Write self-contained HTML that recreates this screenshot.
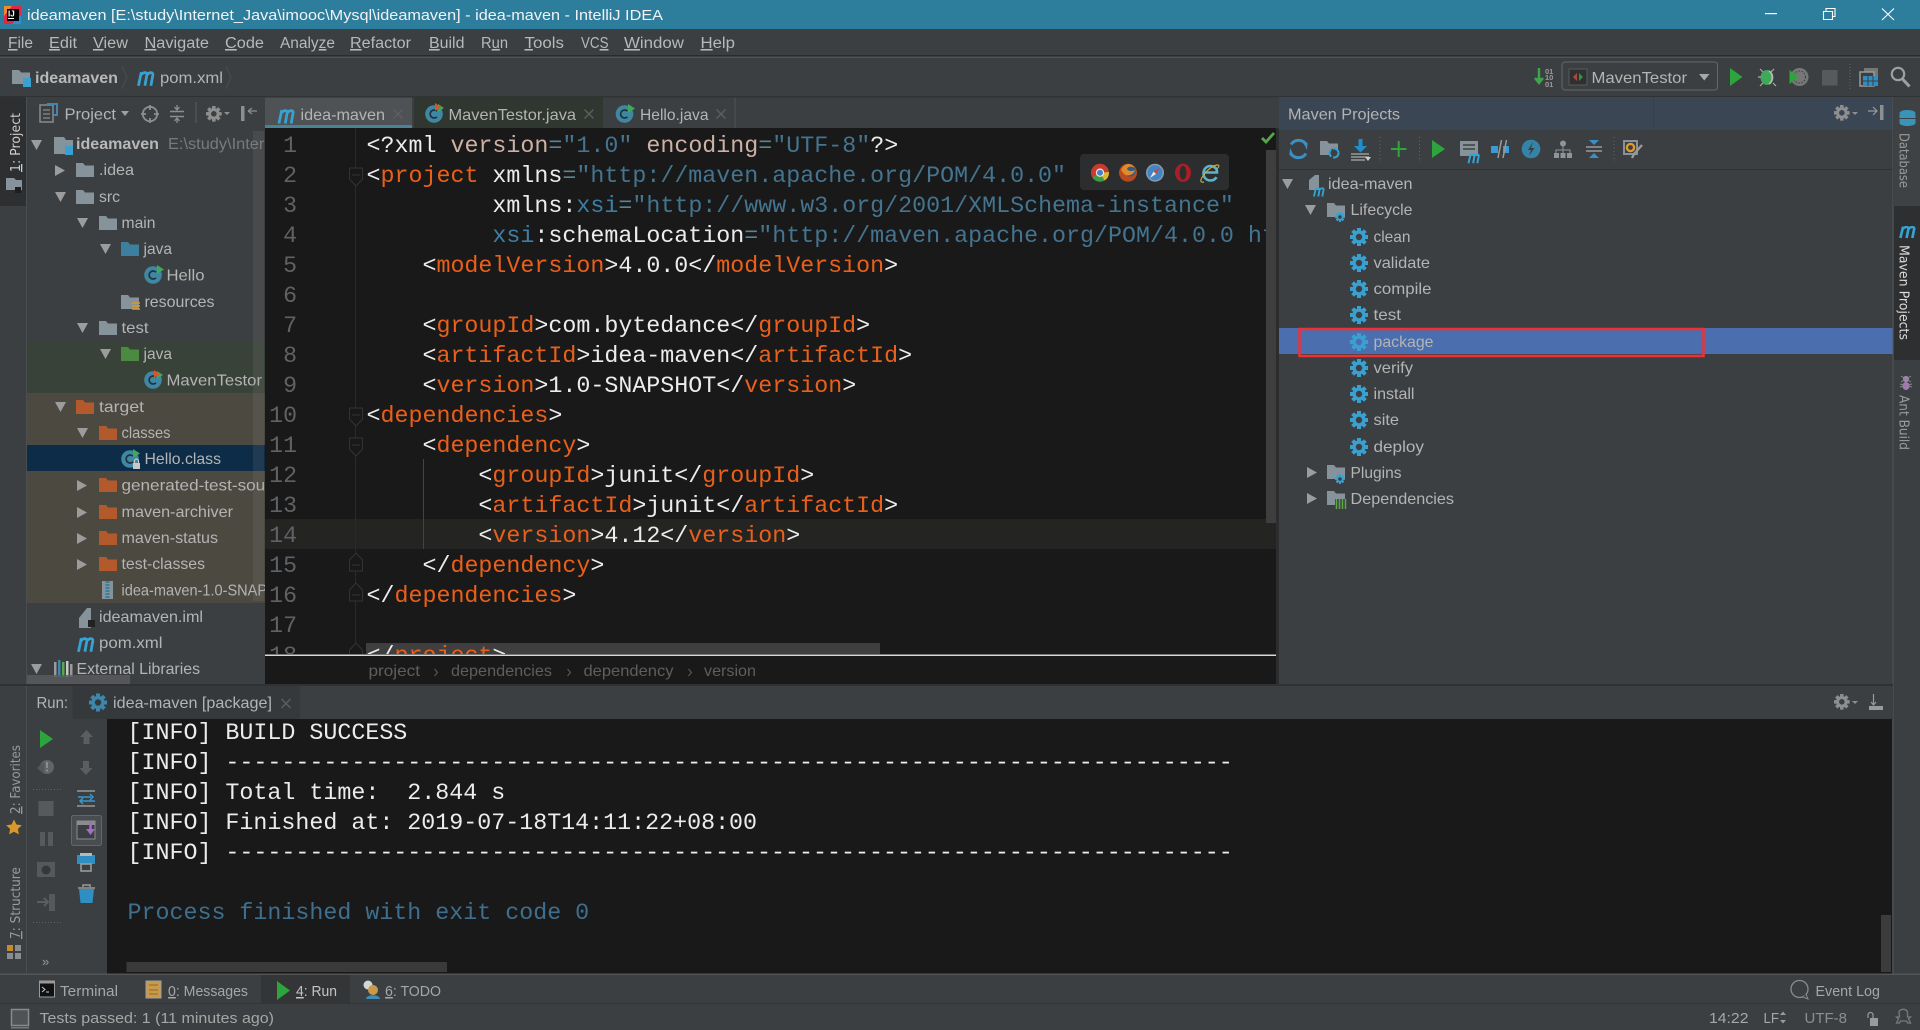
<!DOCTYPE html>
<html><head><meta charset="utf-8"><title>ideamaven - IntelliJ IDEA</title>
<style>
html,body{margin:0;padding:0;background:#3c3f41;width:1920px;height:1030px;overflow:hidden}
svg{display:block}
text{font-family:"Liberation Sans",sans-serif;font-size:16px;fill:#b4b4b4;white-space:pre}
.m{font-size:15.5px;fill:#b8b8b8}
.st{font-size:15px;fill:#a6a6a6}
.gr{fill:#7a7a7a}
.v{font-family:"DejaVu Sans",sans-serif;font-size:13px;fill:#9a9a9a}
.c,.c text,.c tspan{font-family:"Liberation Mono",monospace;font-size:23.32px}
.c text{fill:#ececec}
.n{font-family:"Liberation Mono",monospace;font-size:23.2px;fill:#5f6265}
.o{fill:#e8601c}.b{fill:#44748f}.p{fill:#cdb0a6}.e{fill:#5b8296}.w{fill:#ececec}.x{fill:#3f7ea3}
.u{text-decoration:underline}
.cx{stroke:#5c5f61;stroke-width:1.3;fill:none}
.ln{stroke:#2f3133;stroke-width:1}
</style></head><body>
<svg xmlns="http://www.w3.org/2000/svg" width="1920" height="1030" viewBox="0 0 1920 1030">
<defs>
<path id="f" d="M0 0H7L9 2.5H18V14H0Z"/>
<path id="ad" d="M0 0H11L5.5 10Z" fill="#9c9c9c"/>
<path id="ar" d="M0 0L10 5.5L0 11Z" fill="#9c9c9c"/>
<path id="mi" d="M1.2 14L3.6 2.6M3.2 5C5 2.6 8.6 2.2 8.2 5L6.6 14M8.2 5C10 2.6 13.6 2.2 13.2 5L11.6 14" fill="none" stroke="#37a3d2" stroke-width="2.3"/>
<g id="gr"><circle cx="9" cy="9" r="6.6"/><rect x="7" y="0" width="4" height="18"/><rect x="0" y="7" width="18" height="4"/><rect x="7" y="0" width="4" height="18" transform="rotate(45 9 9)"/><rect x="7" y="0" width="4" height="18" transform="rotate(-45 9 9)"/><circle cx="9" cy="9" r="3.2" fill="currentColor"/></g>
<g id="cl"><circle cx="9" cy="10" r="8.8" fill="#3f87a3"/><path d="M12 7.2A4 4 0 1 0 12 12.8" fill="none" stroke="#20333d" stroke-width="1.7"/></g>
</defs>

<rect width="1920" height="1030" fill="#3c3f41"/>

<!-- title bar -->
<rect width="1920" height="29" fill="#2d7d9d"/>
<rect x="4" y="6" width="17" height="18" fill="#e2264a"/><path d="M4 6h8L4 16z" fill="#f08a2c"/><path d="M21 24h-9l9-9z" fill="#2b8fd8"/>
<rect x="7" y="9" width="12" height="12" fill="#000"/>
<text x="8" y="16.5" style="font-size:8px;font-weight:bold;fill:#fff">IJ</text><rect x="8" y="18" width="6" height="1" fill="#fff"/>
<text x="27" y="20" textLength="636" lengthAdjust="spacingAndGlyphs" style="font-size:15px;fill:#f2f2f2">ideamaven [E:\study\Internet_Java\imooc\Mysql\ideamaven] - idea-maven - IntelliJ IDEA</text>
<rect x="1765" y="13" width="12" height="1.2" fill="#fff"/>
<path d="M1823.5 11.5h9v8h-9zM1826 11.5v-3h9v8h-2.5" fill="none" stroke="#fff" stroke-width="1.1"/>
<path d="M1882 8.5l12 11.5M1894 8.5l-12 11.5" stroke="#fff" stroke-width="1.1" fill="none"/>

<!-- menu -->
<g class="menu">
<text class="m" x="8" y="48" textLength="25" lengthAdjust="spacingAndGlyphs"><tspan class="u m">F</tspan>ile</text>
<text class="m" x="49" y="48" textLength="28" lengthAdjust="spacingAndGlyphs"><tspan class="u m">E</tspan>dit</text>
<text class="m" x="93" y="48" textLength="35" lengthAdjust="spacingAndGlyphs"><tspan class="u m">V</tspan>iew</text>
<text class="m" x="144.5" y="48" textLength="64.5" lengthAdjust="spacingAndGlyphs"><tspan class="u m">N</tspan>avigate</text>
<text class="m" x="225" y="48" textLength="39" lengthAdjust="spacingAndGlyphs"><tspan class="u m">C</tspan>ode</text>
<text class="m" x="280" y="48" textLength="55" lengthAdjust="spacingAndGlyphs">Analy<tspan class="u m">z</tspan>e</text>
<text class="m" x="350" y="48" textLength="61" lengthAdjust="spacingAndGlyphs"><tspan class="u m">R</tspan>efactor</text>
<text class="m" x="429" y="48" textLength="35.5" lengthAdjust="spacingAndGlyphs"><tspan class="u m">B</tspan>uild</text>
<text class="m" x="481" y="48" textLength="27" lengthAdjust="spacingAndGlyphs">R<tspan class="u m">u</tspan>n</text>
<text class="m" x="524.5" y="48" textLength="39.5" lengthAdjust="spacingAndGlyphs"><tspan class="u m">T</tspan>ools</text>
<text class="m" x="581" y="48" textLength="27.5" lengthAdjust="spacingAndGlyphs">VC<tspan class="u m">S</tspan></text>
<text class="m" x="624" y="48" textLength="60" lengthAdjust="spacingAndGlyphs"><tspan class="u m">W</tspan>indow</text>
<text class="m" x="700.5" y="48" textLength="34.5" lengthAdjust="spacingAndGlyphs"><tspan class="u m">H</tspan>elp</text>
</g>
<rect y="55" width="1920" height="1" fill="#2b2b2b"/>
<rect y="57" width="1920" height="1" fill="#515355"/>

<!-- navigation bar -->
<use href="#f" x="12" y="70" fill="#87939a"/><rect x="23" y="78" width="8" height="9" fill="#3aa0d0"/>
<text x="35" y="83" textLength="83" lengthAdjust="spacingAndGlyphs" style="font-weight:bold;fill:#b8b8b8">ideamaven</text>
<path d="M122 66l5 11-5 12" style="stroke:#4a4d4f;fill:none"/>
<use href="#mi" transform="translate(137,69) scale(1.2,1.2)"/>
<text x="160" y="83" textLength="63" lengthAdjust="spacingAndGlyphs">pom.xml</text>
<path d="M226 66l5 11-5 12" style="stroke:#4a4d4f;fill:none"/>
<rect y="96" width="1920" height="1" fill="#2f3133"/>

<!-- right toolbar -->
<path d="M1539 68v12M1535 78l4 5 4-5" stroke="#3ea64a" stroke-width="2.4" fill="#3ea64a"/>
<text x="1545" y="74" style="font-size:7.5px;font-weight:bold;fill:#9a9a9a">01</text><text x="1545" y="80" style="font-size:7.5px;font-weight:bold;fill:#9a9a9a">10</text><text x="1545" y="87" style="font-size:7.5px;font-weight:bold;fill:#9a9a9a">01</text>
<rect x="1562" y="62" width="155.5" height="28" rx="3" fill="#3c3f41" stroke="#646668"/>
<rect x="1569" y="69" width="18" height="16" fill="#2e3032" stroke="#5a5a5a"/><path d="M1577 73l-4 4 4 4z" fill="#b0483a"/><path d="M1579 73l4 4-4 4z" fill="#3e8a4a"/>
<text x="1591.5" y="83" textLength="95.5" lengthAdjust="spacingAndGlyphs">MavenTestor</text>
<path d="M1699 74h10.5l-5.2 6.5z" fill="#a8a8a8"/>
<path d="M1730 68l12.5 9-12.5 9z" fill="#2ba53c"/>
<ellipse cx="1767" cy="77.5" rx="6.5" ry="7.5" fill="#3fa95a"/><path d="M1769 71a6.5 7.500 0 0 1 0 13" fill="none" stroke="#bbb" stroke-width="1.6"/><path d="M1760 69l3 3M1774 69l-3 3M1758 77h3M1760 86l3-3M1776 86l-3-3" stroke="#aaa" stroke-width="1.2"/>
<circle cx="1799.5" cy="77" r="9" fill="#777"/><circle cx="1799.500" cy="77" r="6" fill="none" stroke="#3c3f41" stroke-width="1" stroke-dasharray="1.5 1.5"/><path d="M1789.5 70l9 7-9 7z" fill="#2ba53c"/>
<rect x="1822" y="70" width="15.5" height="15.5" fill="#58595a"/>
<path d="M1850 64v27" stroke="#666" stroke-dasharray="1 2"/>
<rect x="1864" y="68" width="14" height="14" fill="#777"/><rect x="1860" y="72" width="14" height="14" fill="#3c3f41" stroke="#9a9a9a" stroke-width="1.5"/><rect x="1863" y="76" width="15" height="10" fill="#2f8fc2"/><path d="M1863 81h15M1868 76v10M1873 76v10" stroke="#3c3f41"/>
<circle cx="1898" cy="74" r="6.2" fill="none" stroke="#9f9f9f" stroke-width="2.2"/><path d="M1902.5 79l7 7.5" stroke="#9f9f9f" stroke-width="3"/>

<!-- left strip -->
<rect x="0" y="97" width="26" height="109" fill="#2d2f31"/>
<rect x="26" y="97" width="1" height="877" fill="#4b4e50"/>
<text class="v" style="fill:#cfcfcf" transform="translate(20,172) rotate(-90)" textLength="59" lengthAdjust="spacingAndGlyphs"><tspan class="u v" style="fill:#cfcfcf">1</tspan>: Project</text>
<path d="M6 178h8l2 2h6v10H6z" fill="#87939a"/><rect x="15" y="187" width="6" height="6" fill="#1e1e1e"/>
<text class="v" transform="translate(20,814) rotate(-90)" textLength="69" lengthAdjust="spacingAndGlyphs"><tspan class="u v">2</tspan>: Favorites</text>
<path d="M14 819.5l2.4 5 5.4.7-3.9 3.8 1 5.4-4.9-2.6-4.9 2.6 1-5.4-3.9-3.8 5.4-.7z" fill="#d9982c"/>
<text class="v" transform="translate(20,939) rotate(-90)" textLength="72" lengthAdjust="spacingAndGlyphs"><tspan class="u v">7</tspan>: Structure</text>
<rect x="7" y="945" width="6" height="6" fill="#c98a2e"/><rect x="15" y="945" width="6" height="6" fill="#8a8d8f"/><rect x="7" y="953" width="6" height="6" fill="#8a8d8f"/><rect x="15" y="953" width="6" height="6" fill="#8a8d8f"/>

<!-- project pane -->
<rect x="27" y="341" width="238" height="52" fill="#394239"/>
<rect x="27" y="393" width="238" height="210" fill="#4c4940"/>
<rect x="27" y="445" width="238" height="26" fill="#0d2c47"/>

<rect x="40" y="105" width="13" height="17" fill="#3c3f41" stroke="#8a8a8a" stroke-width="1.5"/><path d="M43 110h7M43 114h7M43 118h7" stroke="#8a8a8a" stroke-width="1.3"/><path d="M47 104h10v11h-4" fill="none" stroke="#3f87b0" stroke-width="2"/>
<text x="64.5" y="119.5" textLength="51.5" lengthAdjust="spacingAndGlyphs">Project</text>
<path d="M121 111h8l-4 5z" fill="#a0a0a0"/>
<circle cx="150" cy="114" r="7.2" fill="none" stroke="#8e8e8e" stroke-width="1.8"/><path d="M150 105v5M150 118v5M141 114h5M154 114h5" stroke="#8e8e8e" stroke-width="1.8"/>
<path d="M170 111.5h14M170 116.5h14" stroke="#8e8e8e" stroke-width="1.4"/><path d="M177 105v4M174.5 107l2.5 3 2.5-3M177 123v-4M174.5 121l2.5-3 2.5 3" stroke="#8e8e8e" stroke-width="1.3" fill="none"/>
<rect x="195.5" y="102" width="1" height="21" fill="#5c5f61"/>
<use href="#gr" transform="translate(206,106) scale(.87)" fill="#8e8e8e" color="#3c3f41"/>
<path d="M224 112h6l-3 3z" fill="#8e8e8e"/>
<rect x="241" y="106" width="3.5" height="15" fill="#8e8e8e"/><path d="M248 111h9M248 111l4-3M248 111l4 3" stroke="#8e8e8e" stroke-width="1.2" fill="none"/>

<g>
<use href="#ad" x="31" y="140"/><path d="M54 137h10l2 3h7v14H54z" fill="#87939a"/><rect x="65" y="146" width="8" height="9" fill="#3aa0d0"/>
<text x="76" y="149" textLength="83" lengthAdjust="spacingAndGlyphs" style="font-weight:bold;fill:#b8b8b8">ideamaven</text>
<text class="gr" x="168" y="149" textLength="119" lengthAdjust="spacingAndGlyphs">E:\study\Internet</text>

<use href="#ar" x="55" y="165"/><use href="#f" x="76" y="163" fill="#87939a"/>
<text x="99" y="175" textLength="35" lengthAdjust="spacingAndGlyphs">.idea</text>
<use href="#ad" x="55" y="192"/><use href="#f" x="76" y="190" fill="#87939a"/>
<text x="99" y="202" textLength="21" lengthAdjust="spacingAndGlyphs">src</text>
<use href="#ad" x="77" y="218"/><use href="#f" x="99" y="216" fill="#87939a"/>
<text x="121.5" y="228" textLength="34" lengthAdjust="spacingAndGlyphs">main</text>
<use href="#ad" x="100" y="244"/><use href="#f" x="121" y="242" fill="#3d7f9f"/>
<text x="143.5" y="254" textLength="28.5" lengthAdjust="spacingAndGlyphs">java</text>
<use href="#cl" x="144" y="265"/><path d="M157 265l7 4.5-7 4.5z" fill="#3fa95a"/>
<text x="166.5" y="280.5" textLength="38" lengthAdjust="spacingAndGlyphs">Hello</text>
<use href="#f" x="121" y="295" fill="#87939a"/><path d="M132 303h8M132 306h8M132 309h8" stroke="#d99a2c" stroke-width="1.6"/>
<text x="144.5" y="307" textLength="70" lengthAdjust="spacingAndGlyphs">resources</text>
<use href="#ad" x="77" y="323"/><use href="#f" x="99" y="321" fill="#87939a"/>
<text x="121.5" y="333" textLength="27" lengthAdjust="spacingAndGlyphs">test</text>
<use href="#ad" x="100" y="349"/><use href="#f" x="121" y="347" fill="#4b8a40"/>
<text x="143.5" y="359" textLength="28.5" lengthAdjust="spacingAndGlyphs">java</text>
<use href="#cl" x="144" y="370"/><path d="M157 371l6 4-6 4z" fill="#3fa95a"/><path d="M154 370l6 4-6 4z" fill="#d9532c"/>
<text x="166.5" y="385.5" textLength="95.5" lengthAdjust="spacingAndGlyphs">MavenTestor</text>
<use href="#ad" x="55" y="402"/><use href="#f" x="76" y="400" fill="#b25a2c"/>
<text x="99" y="412" textLength="45" lengthAdjust="spacingAndGlyphs">target</text>
<use href="#ad" x="77" y="428"/><use href="#f" x="99" y="426" fill="#b25a2c"/>
<text x="121.5" y="438" textLength="49" lengthAdjust="spacingAndGlyphs">classes</text>
<use href="#cl" x="121" y="449"/><path d="M133 449l7 4.5-7 4.5z" fill="#3fa95a"/><rect x="133" y="463" width="7" height="6" fill="#c8c8c8"/><path d="M134.5 463v-2a2 2 0 0 1 4 0v2" fill="none" stroke="#c8c8c8" stroke-width="1.2"/>
<text x="144.5" y="464" textLength="76.5" lengthAdjust="spacingAndGlyphs">Hello.class</text>
<use href="#ar" x="77" y="480"/><use href="#f" x="99" y="478" fill="#b25a2c"/>
<text x="121.5" y="490.5" textLength="176" lengthAdjust="spacingAndGlyphs">generated-test-sources</text>
<use href="#ar" x="77" y="507"/><use href="#f" x="99" y="505" fill="#b25a2c"/>
<text x="121.5" y="517" textLength="111.5" lengthAdjust="spacingAndGlyphs">maven-archiver</text>
<use href="#ar" x="77" y="533"/><use href="#f" x="99" y="531" fill="#b25a2c"/>
<text x="121.5" y="543" textLength="96.5" lengthAdjust="spacingAndGlyphs">maven-status</text>
<use href="#ar" x="77" y="559"/><use href="#f" x="99" y="557" fill="#b25a2c"/>
<text x="121.5" y="569" textLength="83.5" lengthAdjust="spacingAndGlyphs">test-classes</text>
<rect x="102" y="581" width="11" height="18" fill="#87939a"/><path d="M107.5 581v18" stroke="#3a7f9f" stroke-width="4" stroke-dasharray="2 1"/>
<text x="121.5" y="595.5" textLength="186" lengthAdjust="spacingAndGlyphs">idea-maven-1.0-SNAPSHOT</text>
<path d="M79 621v-3l8-10h4v20H79z" fill="#87939a"/><rect x="88" y="620" width="7" height="7" fill="#222"/>
<text x="99" y="622" textLength="104" lengthAdjust="spacingAndGlyphs">ideamaven.iml</text>
<use href="#mi" transform="translate(77,635) scale(1.2,1.2)"/>
<text x="99" y="648" textLength="63.5" lengthAdjust="spacingAndGlyphs">pom.xml</text>
<use href="#ad" x="31" y="664"/><rect x="54" y="662" width="2.5" height="15" fill="#9a9a9a"/><rect x="58" y="660" width="2.5" height="17" fill="#3f87b0"/><rect x="62" y="662" width="2.5" height="15" fill="#5ca74a"/><rect x="66" y="661" width="2.5" height="16" fill="#c8c8c8"/><rect x="70" y="664" width="2.5" height="13" fill="#9a9a9a"/>
<text x="76.5" y="674" textLength="123.5" lengthAdjust="spacingAndGlyphs">External Libraries</text>
</g>
<rect x="253" y="131" width="11" height="470" fill="#8a8a8a" opacity=".16"/>
<rect x="27" y="675" width="103" height="9" fill="#5a5d5f" opacity=".8"/>

<!-- editor -->
<rect x="265" y="97" width="1012" height="31" fill="#3c3f41"/>
<rect x="265" y="128" width="1012" height="556" fill="#191919"/>
<rect x="265" y="519" width="1012" height="30" fill="#242422"/>
<rect x="355" y="128" width="1" height="526" fill="#2a2a2a"/>
<rect x="423" y="459" width="1" height="90" fill="#3b4a33"/>

<!-- tabs -->
<rect x="265" y="97" width="147" height="31" fill="#4e5254"/>
<rect x="265" y="125" width="147" height="3" fill="#4a8297"/>
<use href="#mi" transform="translate(277.5,107) scale(1.18,1.18)"/>
<text x="300.5" y="120" textLength="84.5" lengthAdjust="spacingAndGlyphs">idea-maven</text>
<path d="M393.5 109.5l9 9M402.5 109.5l-9 9" class="cx"/>
<rect x="414" y="97" width="189" height="31" fill="#2f3730"/>
<use href="#cl" x="425" y="104"/><path d="M438 104l6 4-6 4z" fill="#3fa95a"/><path d="M435 103l6 4-6 4z" fill="#d9532c"/>
<text x="448.5" y="120" textLength="127.5" lengthAdjust="spacingAndGlyphs">MavenTestor.java</text>
<path d="M584.5 109.5l9 9M593.5 109.5l-9 9" class="cx"/>
<rect x="734.5" y="97" width="1" height="31" fill="#505254"/>
<use href="#cl" x="615.5" y="104"/><path d="M628 104l7 4.5-7 4.5z" fill="#3fa95a"/>
<text x="640" y="120" textLength="68.5" lengthAdjust="spacingAndGlyphs">Hello.java</text>
<path d="M716.5 109.5l9 9M725.5 109.5l-9 9" class="cx"/>
<rect x="265" y="96.5" width="1012" height="1" fill="#323436"/>

<!-- gutter -->
<g text-anchor="end">
<text class="n" x="297" y="152">1</text><text class="n" x="297" y="182">2</text><text class="n" x="297" y="212">3</text><text class="n" x="297" y="242">4</text><text class="n" x="297" y="272">5</text><text class="n" x="297" y="302">6</text><text class="n" x="297" y="332">7</text><text class="n" x="297" y="362">8</text><text class="n" x="297" y="392">9</text><text class="n" x="297" y="422">10</text><text class="n" x="297" y="452">11</text><text class="n" x="297" y="482">12</text><text class="n" x="297" y="512">13</text><text class="n" x="297" y="542">14</text><text class="n" x="297" y="572">15</text><text class="n" x="297" y="602">16</text><text class="n" x="297" y="632">17</text><text class="n" x="297" y="662">18</text>
</g>
<g fill="#191919" stroke="#333" stroke-width="1">
<path d="M349.5 168h13v11l-6.500 7-6.500-7zM352 175h8"/>
<path d="M349.500 408h13v11l-6.500 7-6.500-7zM352 415h8"/>
<path d="M349.500 438h13v11l-6.500 7-6.500-7zM352 445h8"/>
<path d="M349.500 571h13v-11l-6.500-7-6.500 7zM352 565h8"/>
<path d="M349.500 601h13v-11l-6.500-7-6.500 7zM352 595h8"/>
<path d="M349.500 661h13v-11l-6.500-7-6.500 7z"/>
</g>

<!-- code -->
<g class="c">
<text x="366.500" y="152"><tspan class="w">&lt;?xml </tspan><tspan class="p">version</tspan><tspan class="e">=</tspan><tspan class="b">"1.0"</tspan> <tspan class="p">encoding</tspan><tspan class="e">=</tspan><tspan class="b">"UTF-8"</tspan><tspan class="w">?&gt;</tspan></text>
<text x="366.500" y="182"><tspan class="w">&lt;</tspan><tspan class="o">project</tspan><tspan class="w"> xmlns</tspan><tspan class="e">=</tspan><tspan class="b">"http://maven.apache.org/POM/4.0.0"</tspan></text>
<text x="366.500" y="212">         <tspan class="w">xmlns:</tspan><tspan class="x">xsi</tspan><tspan class="e">=</tspan><tspan class="b">"http://www.w3.org/2001/XMLSchema-instance"</tspan></text>
<text x="366.500" y="242">         <tspan class="x">xsi</tspan><tspan class="w">:schemaLocation</tspan><tspan class="e">=</tspan><tspan class="b">"http://maven.apache.org/POM/4.0.0 ht</tspan></text>
<text x="366.500" y="272">    &lt;<tspan class="o">modelVersion</tspan>&gt;4.0.0&lt;/<tspan class="o">modelVersion</tspan>&gt;</text>
<text x="366.500" y="332">    &lt;<tspan class="o">groupId</tspan>&gt;com.bytedance&lt;/<tspan class="o">groupId</tspan>&gt;</text>
<text x="366.500" y="362">    &lt;<tspan class="o">artifactId</tspan>&gt;idea-maven&lt;/<tspan class="o">artifactId</tspan>&gt;</text>
<text x="366.500" y="392">    &lt;<tspan class="o">version</tspan>&gt;1.0-SNAPSHOT&lt;/<tspan class="o">version</tspan>&gt;</text>
<text x="366.500" y="422">&lt;<tspan class="o">dependencies</tspan>&gt;</text>
<text x="366.500" y="452">    &lt;<tspan class="o">dependency</tspan>&gt;</text>
<text x="366.500" y="482">        &lt;<tspan class="o">groupId</tspan>&gt;junit&lt;/<tspan class="o">groupId</tspan>&gt;</text>
<text x="366.500" y="512">        &lt;<tspan class="o">artifactId</tspan>&gt;junit&lt;/<tspan class="o">artifactId</tspan>&gt;</text>
<text x="366.500" y="542">        &lt;<tspan class="o">version</tspan>&gt;4.12&lt;/<tspan class="o">version</tspan>&gt;</text>
<text x="366.500" y="572">    &lt;/<tspan class="o">dependency</tspan>&gt;</text>
<text x="366.500" y="602">&lt;/<tspan class="o">dependencies</tspan>&gt;</text>
<rect x="366" y="643" width="514" height="11" fill="#3f3f3f"/>
<text x="366.500" y="662">&lt;/<tspan class="o">project</tspan>&gt;</text>
</g>
<!-- cover line 18 below editor, breadcrumb -->
<rect x="265" y="654" width="1012" height="30" fill="#191919"/>
<rect x="265" y="654.500" width="1012" height="1.500" fill="#d8d8d8"/>
<text x="368.500" y="676" textLength="51.500" lengthAdjust="spacingAndGlyphs" style="fill:#5e5e5e">project</text>
<path d="M434.500 669l3 3.500-3 3.500" fill="none" stroke="#5e5e5e"/>
<text x="451" y="676" textLength="101" lengthAdjust="spacingAndGlyphs" style="fill:#5e5e5e">dependencies</text>
<path d="M567.500 669l3 3.500-3 3.500" fill="none" stroke="#5e5e5e"/>
<text x="583.500" y="676" textLength="90" lengthAdjust="spacingAndGlyphs" style="fill:#5e5e5e">dependency</text>
<path d="M688.500 669l3 3.500-3 3.500" fill="none" stroke="#5e5e5e"/>
<text x="704" y="676" textLength="52" lengthAdjust="spacingAndGlyphs" style="fill:#5e5e5e">version</text>
<rect x="1266" y="150" width="10" height="373" fill="#3e3e3e"/>
<path d="M1262 138l4 4 8-9" fill="none" stroke="#55a84a" stroke-width="2.800"/>
<rect x="1276" y="128" width="3" height="556" fill="#2b2d2e"/>

<!-- browser icons -->
<rect x="1080" y="154" width="149" height="36" rx="4" fill="#2c2d2e"/>
<g>
<circle cx="1100" cy="172.700" r="9" fill="#c93a30"/><path d="M1100 172.700L1092.200 177.200A9 9 0 0 0 1104.500 180.500z" fill="#3f9a45"/><path d="M1100 172.700L1104.500 180.500A9 9 0 0 0 1109 172.700V172z" fill="#d9b92f"/><circle cx="1100" cy="172.700" r="4.200" fill="#e8e8e8"/><circle cx="1100" cy="172.700" r="3" fill="#4a7fc0"/>
<circle cx="1128" cy="172.700" r="9" fill="#b84a1e"/><circle cx="1130" cy="171" r="5.500" fill="#2d5a8c"/><path d="M1121 170c3-7 10-8 14-2-3-2-7-2-8 1 2 3 6 2 8 1-1 5-8 7-11 4z" fill="#e08a2a"/>
<circle cx="1155" cy="172.700" r="9" fill="#8a9aa8"/><circle cx="1155" cy="172.700" r="7.500" fill="#3f86c4"/><path d="M1160 167.500l-6.500 4 2.500 2.500z" fill="#d8403a"/><path d="M1150 178l6-4-2.500-2.500z" fill="#e8e8e8"/>
<ellipse cx="1183" cy="172.700" rx="8" ry="9.200" fill="#a81f26"/><ellipse cx="1183" cy="172.700" rx="3.400" ry="7" fill="#2c2d2e"/>
<path d="M1203.500 172.500h13.500c.2-4-2.800-6.500-6.500-6.500-4.200 0-7 3.200-7 7.500 0 4 3 7 7 7 2.800 0 4.800-1.300 6-3.300" fill="none" stroke="#5cb4cc" stroke-width="2.600"/><path d="M1204 182c-4 1-4-2-1-6 3-5 9-10 14-11 3-.500 2 2 0 4" fill="none" stroke="#c9a93a" stroke-width="1.200"/>
</g>

<!-- maven pane -->
<rect x="1279" y="97" width="614" height="33" fill="#3a4654"/>
<rect x="1653" y="97" width="1" height="33" fill="#35404c"/>
<text x="1288" y="119.500" textLength="112" lengthAdjust="spacingAndGlyphs">Maven Projects</text>
<use href="#gr" transform="translate(1834,105) scale(.87)" fill="#8e8e8e" color="#3a4654"/>
<path d="M1852 112h6l-3 3z" fill="#8e8e8e"/>
<path d="M1868 111h9M1873 107l4 4-4 4" stroke="#9a9a9a" stroke-width="1.200" fill="none"/><rect x="1880" y="105" width="3.500" height="15" fill="#8e8e8e"/>

<!-- maven toolbar -->
<path d="M1306.500 145a9 9 0 0 0-15.500-.500M1290.500 153a9 9 0 0 0 15.500.500" fill="none" stroke="#3c8fc4" stroke-width="3"/><path d="M1302 140l5.500 3-.500 7zM1295 158l-5.500-3 .500-7z" fill="#3c8fc4"/>
<use href="#f" x="1320" y="141" fill="#87939a"/><circle cx="1334" cy="153" r="4.500" fill="#3c3f41" stroke="#35a0d4" stroke-width="2" stroke-dasharray="8 2"/>
<path d="M1360.500 139v9" stroke="#1e8fce" stroke-width="4"/><path d="M1354 146h13l-6.500 6.500z" fill="#1e8fce"/><path d="M1351 154h18M1351 157h18M1351 160h14" stroke="#9a9a9a" stroke-width="1.400"/><path d="M1365 157h6l-3 4z" fill="#ccc"/>
<path d="M1380 137v25" stroke="#666" stroke-dasharray="1 2.500"/>
<path d="M1391 149h15.500M1398.700 141v16" stroke="#30a53a" stroke-width="2"/>
<path d="M1419.500 137v25" stroke="#666" stroke-dasharray="1 2.500"/>
<path d="M1432 140l13 9-13 9z" fill="#2ba53c"/>
<rect x="1460" y="141" width="18" height="15" fill="#87939a"/><path d="M1463 145h12M1463 149h12" stroke="#3c3f41" stroke-width="1.500"/>
<use href="#mi" transform="translate(1467.500,152) scale(.85,.8)"/>
<rect x="1491" y="146" width="7" height="7" fill="#3c9ad6"/><rect x="1503" y="146" width="6" height="7" fill="#3c9ad6"/><path d="M1498 158l3.500-18M1503 158l3.500-18" stroke="#9a9a9a" stroke-width="1.500"/>
<circle cx="1531" cy="149" r="9.300" fill="#3583a8"/><path d="M1533 142l-5 8h3l-2 6 5.500-8h-3.500z" fill="#3c3f41"/>
<circle cx="1563" cy="143.500" r="3" fill="#8e9598"/><path d="M1563 146v4M1556 153v-3h14v3M1563 150v3" stroke="#8e9598" fill="none"/><rect x="1554" y="153" width="5" height="5" fill="#8e9598"/><rect x="1560.500" y="153" width="5" height="5" fill="#8e9598"/><rect x="1567" y="153" width="5" height="5" fill="#8e9598"/>
<path d="M1586 147h16M1586 151h16" stroke="#9a9a9a" stroke-width="1.600"/><path d="M1589 140h10l-5 5zM1589 158h10l-5-5z" fill="#3c8fc4"/>
<path d="M1614 137v25" stroke="#666" stroke-dasharray="1 2.500"/>
<rect x="1624" y="141" width="13" height="13" fill="#3c3f41" stroke="#87939a" stroke-width="2"/><circle cx="1630.500" cy="147.500" r="3.600" fill="#3c3f41" stroke="#e09a2a" stroke-width="2.400"/><path d="M1642 145l-8 9-2 4" stroke="#9a9a9a" stroke-width="2.400" fill="none"/>
<rect x="1279" y="169" width="614" height="1" fill="#323232"/>

<!-- maven tree -->
<rect x="1279" y="328" width="614" height="26" fill="#4b6eaf"/>
<use href="#ad" x="1282" y="179"/>
<path d="M1309 190v-10l6-5h4v15z" fill="#87939a"/><use href="#mi" transform="translate(1313,186) scale(.8,.75)"/>
<text x="1328" y="189" textLength="84.500" lengthAdjust="spacingAndGlyphs">idea-maven</text>
<use href="#ad" x="1305" y="205"/><use href="#f" x="1327" y="203" fill="#87939a"/><use href="#gr" transform="translate(1335,212) scale(.55)" fill="#3aa0d0" color="#3c3f41"/>
<text x="1350.500" y="215" textLength="62" lengthAdjust="spacingAndGlyphs">Lifecycle</text>
<g fill="#39a0cf" color="#3c3f41">
<use href="#gr" x="1350" y="228"/><use href="#gr" x="1350" y="254"/><use href="#gr" x="1350" y="280"/><use href="#gr" x="1350" y="306"/><use href="#gr" x="1350" y="333" color="#4b6eaf"/><use href="#gr" x="1350" y="359"/><use href="#gr" x="1350" y="385"/><use href="#gr" x="1350" y="411"/><use href="#gr" x="1350" y="438"/>
</g>
<text x="1373.500" y="242" textLength="37" lengthAdjust="spacingAndGlyphs">clean</text>
<text x="1373.500" y="268" textLength="56.500" lengthAdjust="spacingAndGlyphs">validate</text>
<text x="1373.500" y="294" textLength="58" lengthAdjust="spacingAndGlyphs">compile</text>
<text x="1373.500" y="320" textLength="27.500" lengthAdjust="spacingAndGlyphs">test</text>
<text x="1373.500" y="347" textLength="60" lengthAdjust="spacingAndGlyphs">package</text>
<text x="1373.500" y="373" textLength="39.500" lengthAdjust="spacingAndGlyphs">verify</text>
<text x="1373.500" y="399" textLength="41" lengthAdjust="spacingAndGlyphs">install</text>
<text x="1373.500" y="425" textLength="25.500" lengthAdjust="spacingAndGlyphs">site</text>
<text x="1373.500" y="452" textLength="50.500" lengthAdjust="spacingAndGlyphs">deploy</text>
<rect x="1299.500" y="329" width="404" height="27" fill="none" stroke="#f03035" stroke-width="2.500"/>
<use href="#ar" x="1307" y="467"/><use href="#f" x="1327" y="465" fill="#87939a"/><use href="#gr" transform="translate(1335,474) scale(.55)" fill="#3aa0d0" color="#3c3f41"/>
<text x="1350.500" y="478" textLength="51" lengthAdjust="spacingAndGlyphs">Plugins</text>
<use href="#ar" x="1307" y="493"/><use href="#f" x="1327" y="491" fill="#87939a"/><rect x="1335" y="499" width="11" height="10" fill="#3c3f41"/><path d="M1336.500 499v10M1339.500 499v10M1342.500 499v10M1345.500 499v10" stroke-width="1.500" stroke="#5ca74a"/>
<text x="1350.500" y="504" textLength="103.500" lengthAdjust="spacingAndGlyphs">Dependencies</text>

<!-- right strip -->
<rect x="1893" y="97" width="27" height="877" fill="#3c3f41"/>
<rect x="1892.500" y="97" width="1" height="877" fill="#525456"/>
<rect x="1893" y="97" width="27" height="109" fill="#3f4244"/>
<rect x="1894" y="206" width="26" height="154" fill="#2d2f31"/>
<ellipse cx="1907.500" cy="113" rx="8" ry="3" fill="#3a93b8"/><rect x="1899.500" y="114.500" width="16" height="3.500" fill="#3a93b8"/><rect x="1899.500" y="119" width="16" height="3.500" fill="#3a93b8"/><ellipse cx="1907.500" cy="123" rx="8" ry="3" fill="#3a93b8"/>
<text class="v" transform="translate(1899.500,133) rotate(90)" textLength="55" lengthAdjust="spacingAndGlyphs">Database</text>
<use href="#mi" transform="translate(1899,224) scale(1.150,1)"/>
<text class="v" style="fill:#dcdcdc" transform="translate(1899.500,245) rotate(90)" textLength="95" lengthAdjust="spacingAndGlyphs">Maven Projects</text>
<circle cx="1906" cy="379" r="3" fill="#a88ac0"/><ellipse cx="1906" cy="386" rx="3.500" ry="4" fill="#a876c0"/><path d="M1901 376l10 6M1911 376l-10 6M1900 384l12 3M1912 384l-12 3" stroke="#888" stroke-width="1"/>
<text class="v" transform="translate(1899.500,395) rotate(90)" textLength="55" lengthAdjust="spacingAndGlyphs">Ant Build</text>

<!-- run header -->
<rect x="0" y="684" width="1893" height="2" fill="#2f3133"/>
<rect x="27" y="686" width="1866" height="33" fill="#3c3f41"/>
<rect x="72.500" y="686" width="227.500" height="33" fill="#36393b"/>
<text x="36.500" y="708" textLength="31.500" lengthAdjust="spacingAndGlyphs">Run:</text>
<use href="#gr" x="89" y="693.500" fill="#3d87ab" color="#36393b"/>
<text x="113" y="708" textLength="159" lengthAdjust="spacingAndGlyphs">idea-maven [package]</text>
<path d="M281.500 699l9 9M290.500 699l-9 9" class="cx"/>
<use href="#gr" transform="translate(1834,694) scale(.87)" fill="#8e8e8e" color="#3c3f41"/>
<path d="M1852 701h6l-3 3z" fill="#8e8e8e"/>
<path d="M1873.500 694v11M1871 702l2.500 3 2.500-3" stroke="#9a9a9a" stroke-width="1.200" fill="none"/><rect x="1869" y="706" width="14" height="4" fill="#9a9a9a"/>

<!-- run tools -->
<path d="M40 730l13 9-13 9z" fill="#2ba53c"/>
<circle cx="47" cy="767" r="7" fill="#616466"/><path d="M37 768l7-6v12z" fill="#55585a"/><rect x="46" y="762" width="2" height="6" fill="#8a8d8f"/><rect x="46" y="769.500" width="2" height="2" fill="#8a8d8f"/>
<path d="M33 789.500h28" stroke="#5f6264" stroke-dasharray="1 2"/>
<rect x="38.500" y="801" width="15" height="15" fill="#58595a"/>
<rect x="40" y="832" width="5" height="14" fill="#58595a"/><rect x="48" y="832" width="5" height="14" fill="#58595a"/>
<rect x="37" y="862" width="18" height="15" fill="#56585a"/><circle cx="46" cy="870" r="4.500" fill="#35373a"/>
<path d="M37 902h11M44 898l4 4-4 4" stroke="#5b5e60" stroke-width="2" fill="none"/><path d="M49 894h6v17h-6" fill="#56585a"/>
<path d="M33 922.500h28" stroke="#5f6264" stroke-dasharray="1 2"/>
<text x="42" y="966" style="font-size:13px;fill:#9a9a9a">»</text>
<path d="M86.500 730l6.500 7h-3.500v7h-6v-7H80z" fill="#5b5e60"/>
<path d="M86 775l6.500-7h-3.500v-7h-6v7h-3.500z" fill="#5b5e60"/>
<path d="M77 791h18M77 806h18" stroke="#999" stroke-width="1.500"/><path d="M78 797h13M90 794l3 3-3 3M95 801H81M83 798l-3 3 3 3" stroke="#3a97cc" stroke-width="1.500" fill="none"/>
<rect x="71.500" y="815.500" width="30" height="30" rx="2" fill="#4a4d4f" stroke="#64676a"/>
<rect x="77" y="821" width="18" height="18" fill="#3c3f41" stroke="#8a8d8f"/><rect x="77" y="821" width="18" height="4" fill="#8a8d8f"/><path d="M90.500 821v10" stroke="#a56cc8" stroke-width="2.500"/><path d="M86 829h9l-4.500 6z" fill="#a56cc8"/>
<rect x="77" y="855" width="18" height="9" fill="#2f8fc2"/><rect x="80" y="853" width="12" height="3" fill="#b8b8b8"/><rect x="81" y="864" width="10" height="7" fill="#3c3f41" stroke="#a0a0a0" stroke-width="1.500"/>
<path d="M79 889h15l-1.500 14h-12z" fill="#2f8fc2"/><path d="M78 888h17M83 887v-2h7v2" stroke="#9a9a9a" stroke-width="1.500" fill="none"/>

<!-- console -->
<rect x="107" y="719" width="1785" height="255" fill="#191919"/>
<g class="c">
<text x="127.500" y="739">[INFO] BUILD SUCCESS</text>
<text x="127.500" y="769">[INFO] ------------------------------------------------------------------------</text>
<text x="127.500" y="799">[INFO] Total time:  2.844 s</text>
<text x="127.500" y="829">[INFO] Finished at: 2019-07-18T14:11:22+08:00</text>
<text x="127.500" y="859">[INFO] ------------------------------------------------------------------------</text>
<text x="127.500" y="919" style="fill:#3e6f8e">Process finished with exit code 0</text>
</g>
<rect x="126.500" y="962" width="320.500" height="10" fill="#3a3a3a"/>
<rect x="1881" y="915" width="10" height="57" fill="#3c3c3c"/>

<!-- tool window bar -->
<rect x="0" y="973.500" width="1920" height="1.500" fill="#525456"/>
<rect x="261" y="975" width="89" height="28" fill="#333537"/>
<rect x="39.500" y="981" width="15" height="16" fill="#111" stroke="#9a9a9a"/><rect x="39.500" y="981" width="15" height="2.500" fill="#9a9a9a"/><path d="M42 987l3 2.500-3 2.500M46 992h3" stroke="#ccc" fill="none"/>
<text x="60" y="996" textLength="58" lengthAdjust="spacingAndGlyphs" class="st" style="font-size:15px">Terminal</text>
<rect x="146" y="981" width="15" height="17" fill="#c99a4a" stroke="#a0a0a0"/><path d="M149 985h9M149 990h9M149 994h9" stroke="#8a6a2a"/>
<text x="168" y="996" textLength="80" lengthAdjust="spacingAndGlyphs" class="st"><tspan class="u st">0</tspan>: Messages</text>
<path d="M277 981l13 9.500-13 9.500z" fill="#2ba53c"/>
<text x="296" y="996" textLength="41" lengthAdjust="spacingAndGlyphs" class="st" style="fill:#c4c4c4"><tspan class="u st" style="fill:#c4c4c4">4</tspan>: Run</text>
<circle cx="368" cy="985" r="4.500" fill="#d4d4d4"/><circle cx="373" cy="990" r="5" fill="#c99a4a"/><path d="M366 999c0-5 14-5 14 0z" fill="#3c8fb8"/>
<text x="385" y="996" textLength="56" lengthAdjust="spacingAndGlyphs" class="st"><tspan class="u st">6</tspan>: TODO</text>
<circle cx="1799.500" cy="989" r="8.500" fill="none" stroke="#8a8a8a" stroke-width="1.300"/><path d="M1803 997l5 2-2-5" stroke="#8a8a8a" fill="#3c3f41"/>
<text x="1815.500" y="996" textLength="64.500" lengthAdjust="spacingAndGlyphs" class="st">Event Log</text>
<rect x="0" y="1003" width="1920" height="1" fill="#323436"/>

<!-- status bar -->
<rect x="11.500" y="1009.500" width="17" height="16" fill="#505355" stroke="#8a8a8a" stroke-width="1.500"/><rect x="11" y="1027" width="18" height="1.500" fill="#777"/>
<text x="39.500" y="1023" textLength="234.500" lengthAdjust="spacingAndGlyphs" class="st">Tests passed: 1 (11 minutes ago)</text>
<text x="1709" y="1023" textLength="39.500" lengthAdjust="spacingAndGlyphs" class="st">14:22</text>
<text x="1763.500" y="1023" textLength="15.500" lengthAdjust="spacingAndGlyphs" class="st">LF</text>
<path d="M1780 1015l3-3.500 3 3.500zM1780 1020l3 3.500 3-3.500z" fill="#9a9a9a"/>
<text x="1804.500" y="1023" textLength="42.500" lengthAdjust="spacingAndGlyphs" class="st" style="fill:#8e8e8e">UTF-8</text>
<rect x="1870" y="1018" width="8" height="8" fill="#9a9a9a"/><path d="M1868 1018v-3a2.500 2.500 0 0 1 5 0v3" fill="none" stroke="#9a9a9a" stroke-width="1.200"/>
<path d="M1899 1012a4.500 4 0 0 1 8.500 0v5h3l-2 2 2 4h-3l-1-2h-6l-1 2h-3l2-4-2-2h3z" fill="none" stroke="#7a7a7a" stroke-width="1.300"/>
</svg>
</body></html>
